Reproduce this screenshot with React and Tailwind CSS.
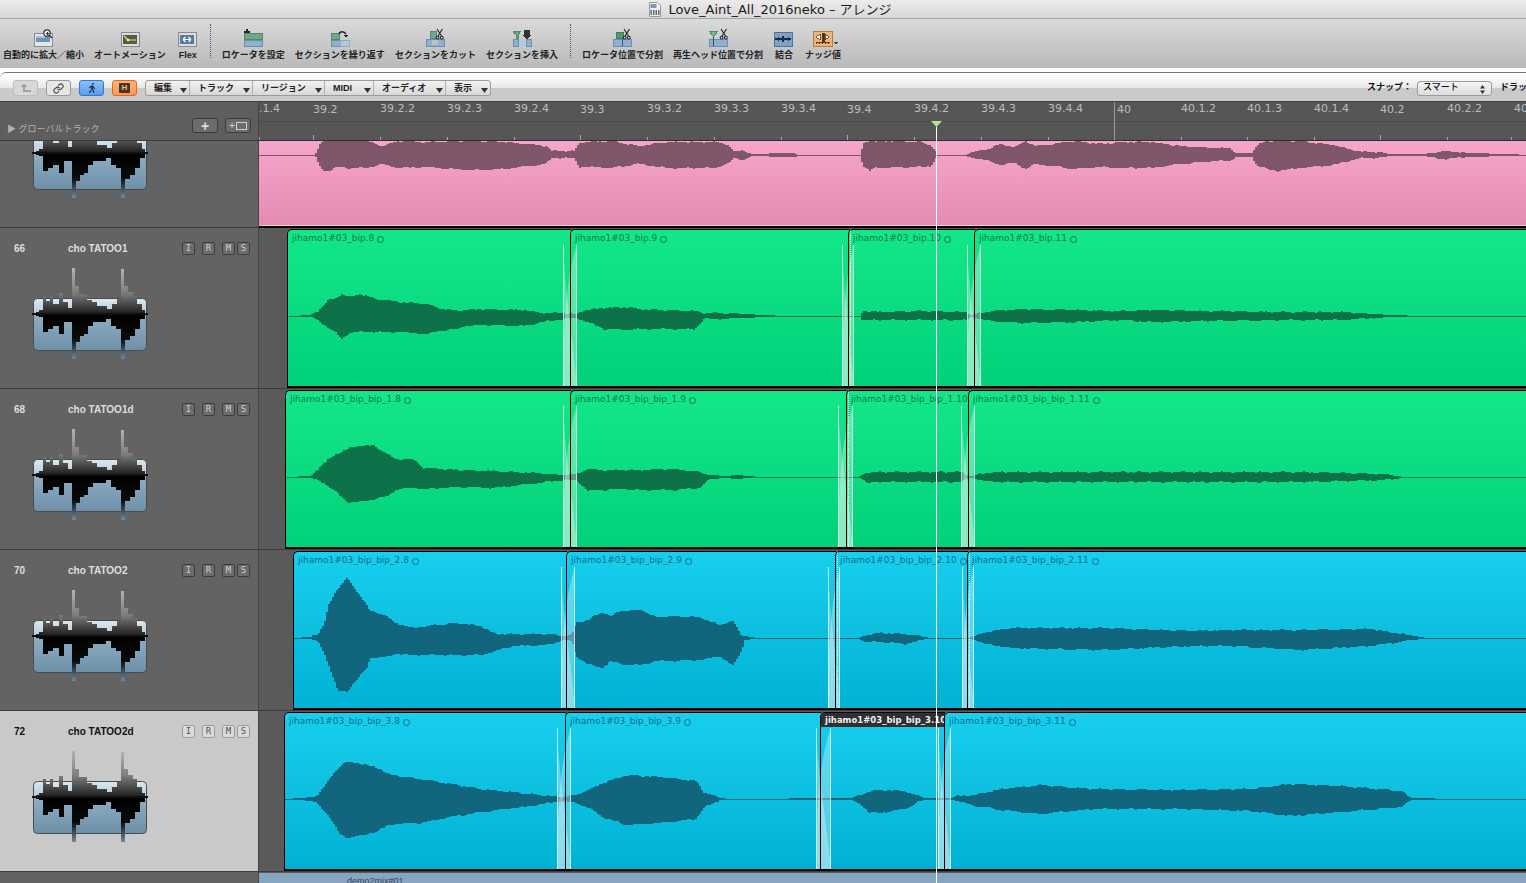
import React from 'react';
import { Link } from 'lucide-react';
import { FaWalking } from 'react-icons/fa';

const SANS = "font-['Liberation_Sans','Noto_Sans_CJK_JP',sans-serif]";

// envelope points: [x on screen, px above centre, px below centre]
const PINK_WAVE = [
  [259, 0, 1], [314, 0, 1], [320, 13, 13], [324, 15, 16], [330, 15, 15], [337, 15, 12], [349, 15, 13], [365, 14, 13], [381, 9, 9],
  [398, 14, 13], [422, 13, 12], [467, 14, 15], [504, 13, 14], [528, 11, 11], [545, 9, 9], [551, 4, 3], [573, 4, 3], [579, 12, 12],
  [586, 13, 12], [610, 14, 13], [637, 9, 9], [667, 13, 13], [714, 13, 13], [726, 11, 9], [734, 3, 3], [741, 5, 5], [751, 1, 1],
  [767, 1, 1], [770, 2, 2], [794, 2, 2], [797, 0, 1], [859, 0, 1], [863, 12, 12], [869, 15, 16], [875, 13, 12], [881, 14, 13],
  [920, 13, 12], [930, 10, 11], [936, 2, 2], [937, 0, 1], [965, 0, 1], [966, 2, 2], [984, 5, 5], [1000, 11, 10], [1014, 8, 8],
  [1025, 14, 14], [1034, 9, 9], [1052, 11, 11], [1072, 14, 14], [1100, 11, 12], [1124, 13, 13], [1151, 13, 13], [1179, 9, 9],
  [1213, 7, 6], [1229, 7, 6], [1235, 2, 2], [1251, 2, 2], [1255, 9, 9], [1265, 14, 14], [1275, 14, 16], [1299, 14, 13],
  [1333, 10, 10], [1347, 6, 6], [1361, 3, 3], [1377, 3, 3], [1389, 1, 1], [1425, 1, 1], [1427, 2, 2], [1445, 4, 4], [1465, 2, 2],
  [1511, 1, 1], [1526, 0, 1],
];

const WAVE_66 = [
  [289, 0, 1], [310, 1, 1], [317, 5, 4], [328, 16, 12], [334, 17, 16], [341, 22, 23], [348, 19, 17], [359, 22, 16], [376, 17, 16],
  [398, 14, 16], [426, 12, 18], [437, 8, 15], [457, 5, 13], [462, 6, 10], [485, 7, 9], [523, 6, 10], [541, 3, 6], [562, 3, 3],
  [575, 2, 2], [584, 6, 5], [603, 8, 13], [626, 9, 14], [637, 7, 13], [694, 5, 13], [703, 3, 3], [719, 3, 3], [766, 1, 1],
  [780, 0, 1], [859, 0, 1], [862, 5, 4], [880, 4, 4], [920, 5, 4], [965, 4, 4], [970, 1, 1], [980, 3, 3], [990, 5, 5], [1020, 7, 7],
  [1080, 6, 6], [1120, 5, 4], [1150, 6, 6], [1200, 5, 5], [1280, 4, 4], [1340, 4, 4], [1390, 1, 1], [1420, 0, 1], [1526, 0, 1],
];

const WAVE_68 = [
  [287, 0, 1], [310, 1, 1], [316, 7, 3], [323, 14, 6], [334, 22, 14], [346, 28, 25], [360, 32, 25], [373, 31, 22], [387, 23, 19],
  [394, 18, 13], [407, 18, 11], [414, 17, 11], [423, 9, 12], [459, 7, 10], [494, 6, 11], [537, 4, 6], [562, 2, 3], [575, 3, 3],
  [587, 8, 14], [601, 7, 13], [623, 7, 12], [637, 7, 13], [673, 8, 13], [698, 5, 11], [709, 2, 2], [726, 1, 1], [734, 2, 2],
  [751, 1, 1], [755, 0, 1], [858, 0, 1], [862, 2, 2], [866, 5, 6], [880, 5, 5], [960, 5, 5], [968, 1, 1], [975, 2, 2], [985, 4, 4],
  [1000, 5, 5], [1100, 5, 5], [1200, 5, 5], [1300, 5, 5], [1380, 3, 3], [1405, 0, 1], [1526, 0, 1],
];

const WAVE_70 = [
  [294, 0, 1], [309, 1, 1], [317, 4, 4], [323, 14, 14], [328, 33, 28], [337, 50, 53], [346, 60, 53], [355, 48, 43], [366, 33, 30],
  [369, 27, 20], [384, 23, 19], [394, 15, 16], [412, 10, 17], [434, 13, 17], [455, 15, 17], [480, 12, 17], [494, 4, 13], [512, 4, 8],
  [548, 4, 7], [562, 2, 2], [571, 3, 3], [575, 15, 18], [587, 18, 26], [601, 26, 30], [610, 22, 23], [619, 27, 26], [641, 28, 27],
  [655, 21, 23], [669, 22, 23], [698, 21, 22], [719, 13, 18], [732, 17, 28], [741, 2, 12], [744, 2, 2], [755, 0, 1], [858, 0, 1],
  [865, 3, 4], [880, 5, 4], [905, 4, 6], [925, 1, 1], [930, 0, 1], [968, 0, 1], [975, 2, 2], [985, 6, 6], [1010, 10, 10],
  [1100, 10, 12], [1190, 7, 8], [1230, 8, 8], [1300, 8, 12], [1370, 9, 8], [1420, 1, 1], [1424, 0, 1], [1526, 0, 1],
];

const WAVE_72 = [
  [285, 0, 1], [300, 1, 1], [313, 2, 3], [317, 5, 5], [328, 19, 17], [338, 32, 34], [345, 37, 39], [363, 35, 36], [377, 31, 32], [390, 24, 25],
  [420, 20, 24], [450, 15, 18], [480, 10, 13], [530, 5, 7], [560, 2, 2], [575, 4, 4], [590, 10, 10], [602, 16, 18], [625, 24, 26], [660, 22, 24], [695, 18, 20],
  [703, 7, 9], [720, 1, 1], [726, 0, 1], [850, 1, 1], [860, 4, 5], [868, 8, 14], [887, 9, 13], [907, 7, 9], [917, 3, 3], [924, 1, 1],
  [950, 1, 1], [957, 3, 2], [975, 4, 7], [1000, 10, 11], [1040, 14, 15], [1090, 10, 10], [1180, 9, 10], [1250, 10, 12],
  [1290, 15, 17], [1340, 13, 13], [1400, 8, 8], [1410, 1, 1], [1430, 1, 1], [1436, 0, 1], [1526, 0, 1],
];

const buildWave = (pts, cy) => {
  let top = '';
  let bottom = '';
  let n = 0;
  for (let x = pts[0][0]; x < pts[pts.length - 1][0]; x += 2) {
    while (pts[n + 1][0] < x) n++;
    const [x0, u0, d0] = pts[n];
    const [x1, u1, d1] = pts[n + 1];
    const t = (x - x0) / (x1 - x0 || 1);
    const up = u0 + (u1 - u0) * t;
    const down = d0 + (d1 - d0) * t;
    const wobble = Math.sin(x * 0.31) * 0.5 + Math.sin(x * 0.83) * 0.3;
    const wobble2 = Math.sin(x * 0.27 + 2) * 0.5 + Math.sin(x * 0.71) * 0.3;
    const yTop = cy - (up > 2 ? Math.round(up + wobble) : Math.round(up));
    const yBot = cy + Math.max(1, down > 2 ? Math.round(down + wobble2) : Math.round(down));
    const px = x - 259;
    top += `${top ? 'L' : 'M'}${px} ${yTop}L${px + 2} ${yTop}`;
    bottom = `L${px + 2} ${yBot}L${px} ${yBot}` + bottom;
  }
  return `${top}${bottom}Z`;
};

const GREEN = 'bg-linear-to-b from-[#13e788] to-[#01d17a]';
const BLUE = 'bg-linear-to-b from-[#18cfee] to-[#00b1d2]';

const LANES = [
  {
    num: '66', name: 'cho TATOO1', fill: GREEN, wave: '#0d7249', text: 'text-[#0b7a4d]', ring: 'border-[#0b7a4d]', cy: 88, pts: WAVE_66,
    regions: [
      { x: 287, label: 'jihamo1#03_bip.8' },
      { x: 570, label: 'jihamo1#03_bip.9' },
      { x: 848, label: 'jihamo1#03_bip.10', dotted: true },
      { x: 974, label: 'jihamo1#03_bip.11' },
    ],
    fades: [[563, 570, 577], [842, 848, 854], [967, 974, 981]],
  },
  {
    num: '68', name: 'cho TATOO1d', fill: GREEN, wave: '#0d7249', text: 'text-[#0b7a4d]', ring: 'border-[#0b7a4d]', cy: 88, pts: WAVE_68,
    regions: [
      { x: 285, label: 'jihamo1#03_bip_bip_1.8' },
      { x: 570, label: 'jihamo1#03_bip_bip_1.9' },
      { x: 846, label: 'jihamo1#03_bip_bip_1.10', dotted: true },
      { x: 968, label: 'jihamo1#03_bip_bip_1.11' },
    ],
    fades: [[838, 846, 853], [563, 570, 577], [961, 968, 975]],
  },
  {
    num: '70', name: 'cho TATOO2', fill: BLUE, wave: '#11657d', text: 'text-[#0c6f8c]', ring: 'border-[#0c6f8c]', cy: 88, pts: WAVE_70,
    regions: [
      { x: 293, label: 'jihamo1#03_bip_bip_2.8' },
      { x: 566, label: 'jihamo1#03_bip_bip_2.9' },
      { x: 835, label: 'jihamo1#03_bip_bip_2.10', dotted: true },
      { x: 967, label: 'jihamo1#03_bip_bip_2.11', dotted: true },
    ],
    fades: [[561, 566, 575], [828, 835, 840], [962, 967, 974]],
  },
  {
    num: '72', name: 'cho TATOO2d', fill: BLUE, wave: '#11657d', text: 'text-[#0c6f8c]', ring: 'border-[#0c6f8c]', cy: 88, pts: WAVE_72, active: true,
    regions: [
      { x: 284, label: 'jihamo1#03_bip_bip_3.8' },
      { x: 565, label: 'jihamo1#03_bip_bip_3.9' },
      { x: 820, label: 'jihamo1#03_bip_bip_3.10', selected: true },
      { x: 944, label: 'jihamo1#03_bip_bip_3.11' },
    ],
    fades: [[816, 820, 831], [557, 565, 571], [938, 944, 951]],
  },
];

const RULER = [
  ['.1.4', 259], ['39.2', 313, true], ['39.2.2', 380], ['39.2.3', 447], ['39.2.4', 514], ['39.3', 580, true], ['39.3.2', 647],
  ['39.3.3', 714], ['39.3.4', 781], ['39.4', 847, true], ['39.4.2', 914], ['39.4.3', 981], ['39.4.4', 1048], ['40', 1117, true],
  ['40.1.2', 1181], ['40.1.3', 1247], ['40.1.4', 1314], ['40.2', 1380, true], ['40.2.2', 1447], ['40', 1514],
];

const Bars = ({ children }) => (
  <svg width="20" height="18" viewBox="0 0 20 18" className="overflow-visible" shapeRendering="crispEdges">
    {children}
  </svg>
);

const Scissors = ({ x = 11 }) => (
  <g transform={`translate(${x} 0)`} fill="none" stroke="#222" strokeWidth="1.1" shapeRendering="auto">
    <path d="M1 0l4.500 7M6.500 0L2 7" />
    <circle cx="1.600" cy="8.600" r="1.400" fill="#eee" />
    <circle cx="5.800" cy="8.600" r="1.400" fill="#eee" />
  </g>
);

const ICONS = {
  zoom: (
    <Bars>
      <rect x="0" y="4" width="18" height="13" fill="#e6e6e6" stroke="#8a8a8a" />
      <rect x="2" y="7" width="14" height="6" fill="#6f93b8" />
      <rect x="2" y="7" width="9" height="2" fill="#a9c2da" />
      <circle cx="13" cy="4" r="3.200" fill="#f2f2f2" stroke="#333" strokeWidth="1.200" shapeRendering="auto" />
      <path d="M15.300 6.300l2.700 2.700" stroke="#333" strokeWidth="1.400" shapeRendering="auto" />
      <path d="M11.500 4h3M13 2.500v3" stroke="#333" />
    </Bars>
  ),
  auto: (
    <Bars>
      <rect x="1" y="3" width="18" height="14" fill="#dcdcdc" stroke="#8a8a8a" />
      <rect x="3" y="6" width="14" height="9" fill="#5a5a48" />
      <path d="M4 7l4 4h8" fill="none" stroke="#f2e060" strokeWidth="1.200" shapeRendering="auto" />
      <circle cx="8" cy="11" r="1.300" fill="#fff7a0" shapeRendering="auto" />
    </Bars>
  ),
  flex: (
    <Bars>
      <rect x="0" y="3" width="18" height="14" fill="#dcdcdc" stroke="#8a8a8a" />
      <rect x="2" y="6" width="14" height="9" fill="#557a9c" />
      <path d="M5 10.500h8M5 10.500l2.500-2.500M5 10.500l2.500 2.500M13 10.500l-2.500-2.500M13 10.500l-2.500 2.500" fill="none" stroke="#fff" strokeWidth="1.200" shapeRendering="auto" />
    </Bars>
  ),
  locator: (
    <Bars>
      <path d="M3 0h2v2h2v2H5v2H3V4H1V2h2z" fill="#222" />
      <rect x="1" y="4" width="18" height="6" fill="#6fa98a" stroke="#4e8a6b" />
      <rect x="1" y="11" width="18" height="6" fill="#8fb0cf" stroke="#6c8fb0" />
    </Bars>
  ),
  repeat: (
    <Bars>
      <rect x="1" y="4" width="8" height="6" fill="#6fa98a" stroke="#4e8a6b" />
      <rect x="1" y="11" width="9" height="6" fill="#8fb0cf" stroke="#6c8fb0" />
      <rect x="10" y="11" width="9" height="6" fill="#b4c8da" stroke="#93abc0" />
      <path d="M9 5c1-3 5-3 7 0" fill="none" stroke="#222" strokeWidth="1.600" shapeRendering="auto" />
      <path d="M13.500 5.500h5l-2.500 3z" fill="#222" />
    </Bars>
  ),
  cut: (
    <Bars>
      <rect x="5" y="2" width="6" height="7" fill="#6fa98a" stroke="#4e8a6b" />
      <rect x="1" y="10" width="18" height="7" fill="#8fb0cf" stroke="#6c8fb0" />
      <rect x="7" y="11" width="6" height="5" fill="#c0c0c0" />
      <Scissors />
    </Bars>
  ),
  insert: (
    <Bars>
      <path d="M1 2h8L6 6v3H4V6z" fill="#6fa98a" stroke="#4e8a6b" />
      <rect x="1" y="10" width="5" height="7" fill="#8fb0cf" stroke="#6c8fb0" />
      <rect x="14" y="10" width="5" height="7" fill="#8fb0cf" stroke="#6c8fb0" />
      <rect x="7" y="10" width="6" height="7" fill="#b4c8da" />
      <path d="M12 1h6v5h2l-5 4-5-4h2z" fill="#333" />
    </Bars>
  ),
  splitLoc: (
    <Bars>
      <rect x="4" y="3" width="7" height="6" fill="#4f9a72" stroke="#3c7f5c" />
      <rect x="1" y="10" width="18" height="7" fill="#8fb0cf" stroke="#6c8fb0" />
      <path d="M10 10v7" stroke="#3d5d7c" />
      <Scissors />
    </Bars>
  ),
  splitHead: (
    <Bars>
      <rect x="1" y="10" width="18" height="7" fill="#8fb0cf" stroke="#6c8fb0" />
      <path d="M1 2h9L5.500 8z" fill="#6fbf8f" stroke="#4e8a6b" />
      <path d="M5.500 8v9" stroke="#2c4660" />
      <Scissors x={12} />
    </Bars>
  ),
  merge: (
    <Bars>
      <rect x="0" y="3" width="18" height="14" fill="#7ea2c6" stroke="#4f7396" />
      <path d="M1 10h16" stroke="#1c2c3c" strokeWidth="1.200" />
      <path d="M4 8v4M14 8v4M9 7.500l-2 2.500 2 2.500 2-2.500z" fill="#1c2c3c" stroke="#1c2c3c" />
    </Bars>
  ),
  nudge: (
    <Bars>
      <rect x="0" y="2" width="19" height="15" fill="#edb47c" stroke="#b47a3f" />
      <path d="M7 5L3 8l4 3zM12 5l4 3-4 3z" fill="#fff" stroke="#5a3a18" strokeWidth="0.800" />
      <path d="M9 4h2v9H9zM3 13h14" fill="#4a2f12" stroke="#5a3a18" />
      <path d="M3 13v2M6 13v2M9 13v2M12 13v2M15 13v2" stroke="#5a3a18" />
      <path d="M21 13h4l-2 3z" fill="#444" />
    </Bars>
  ),
};

const TOOLS = [
  { icon: 'zoom', label: '自動的に拡大／縮小' },
  { icon: 'auto', label: 'オートメーション' },
  { icon: 'flex', label: 'Flex', cls: 'px-[2px]' },
  { sep: 'ml-0' },
  { icon: 'locator', label: 'ロケータを設定' },
  { icon: 'repeat', label: 'セクションを繰り返す' },
  { icon: 'cut', label: 'セクションをカット' },
  { icon: 'insert', label: 'セクションを挿入' },
  { sep: 'ml-[2px]' },
  { icon: 'splitLoc', label: 'ロケータ位置で分割' },
  { icon: 'splitHead', label: '再生ヘッド位置で分割' },
  { icon: 'merge', label: '結合', cls: 'ml-[1px] !mr-[11px]' },
  { icon: 'nudge', label: 'ナッジ値' },
];

const MENUS = [
  ['編集', 'w-[44px]'], ['トラック', 'w-[63px]'], ['リージョン', 'w-[72px]'], ['MIDI', 'w-[49px]'], ['オーディオ', 'w-[72px]'], ['表示', 'w-[44px]'],
];

const Toolbar = () => (
  <div className="flex h-[49px] items-start bg-linear-to-b from-[#dadada] to-[#b9b9b9] pl-[3px] pt-[10px]">
    {TOOLS.map((t, i) =>
      t.sep ? (
        <div key={i} className={`mt-[-5px] mr-[11px] h-[34px] w-px border-l border-dotted border-[#555] ${t.sep}`} />
      ) : (
        <div key={i} className={`mr-[10px] flex flex-col items-center ${t.cls || ''}`}>
          <div className="h-[18px]">{ICONS[t.icon]}</div>
          <span className="mt-[3px] whitespace-nowrap text-[9px] leading-[10px] font-bold text-[#222]">{t.label}</span>
        </div>
      )
    )}
  </div>
);

const SmallButton = ({ cls, children }) => (
  <div className={`flex h-[16px] w-[25px] items-center justify-center rounded-[3px] border ${cls}`}>{children}</div>
);

const LocalBar = () => (
  <div className="bg-white pt-[4px]">
    <div className="flex h-[30px] items-center rounded-tl-[6px] border-t border-b border-t-[#777] border-b-[#3d3d3d] bg-[linear-gradient(#fff_0,#fff_3px,#e6e6e6_15px,#cacaca_15px)] pt-[2px] pr-0 pl-[13px]">
      <SmallButton cls="border-[#bdbdbd] bg-[#d8d8d8]">
        <svg width="13" height="10" viewBox="0 0 13 10"><path d="M4 9V4H1.500L5 .5 8.500 4H6v3h6v2z" fill="#a2a2a2" /></svg>
      </SmallButton>
      <SmallButton cls="ml-[8px] border-[#999] bg-[#e6e6e6]">
        <Link size={11} strokeWidth={2.4} color="#444" />
      </SmallButton>
      <SmallButton cls="ml-[8px] border-[#2d78d0] bg-linear-to-b from-[#8cc0f7] to-[#5a9cea]">
        <FaWalking size={10} color="#17314f" />
      </SmallButton>
      <SmallButton cls="ml-[8px] border-[#e06a1f] bg-linear-to-b from-[#ffb37a] to-[#f79a58]">
        <span className="flex h-[10px] w-[11px] items-center justify-center rounded-[1px] bg-[#4a3526] text-[8px] leading-none font-bold text-[#f5b98a]">H</span>
      </SmallButton>
      <div className="ml-[8px] flex h-[16px] overflow-hidden rounded-[3px] border border-[#9a9a9a] bg-linear-to-b from-[#f2f2f2] to-[#d8d8d8]">
        {MENUS.map(([label, w]) => (
          <div key={label} className={`relative flex items-center border-r border-[#b0b0b0] pl-[8px] text-[9px] leading-[10px] font-bold text-[#222] last:border-r-0 ${w}`}>
            {label}
            <svg className="absolute right-[2px] bottom-[2px]" width="7" height="5" viewBox="0 0 7 5"><path d="M0 0h7L3.500 5z" fill="#333" /></svg>
          </div>
        ))}
      </div>
      <div className="ml-auto flex items-center">
        <span className="text-[9px] font-bold text-[#111]">スナップ：</span>
        <div className="relative mr-[8px] ml-[5px] flex h-[15px] w-[75px] items-center rounded-[3px] border border-[#9a9a9a] bg-linear-to-b from-[#f4f4f4] to-[#dedede] pl-[5px] text-[9px] font-medium text-[#111]">
          スマート
          <svg className="absolute top-[3px] right-[6px]" width="5" height="9" viewBox="0 0 5 9"><path d="M0 3.500L2.500 0 5 3.500zM0 5.500L2.500 9 5 5.500z" fill="#333" /></svg>
        </div>
        <span className="w-[26px] overflow-hidden text-[9px] whitespace-nowrap font-bold text-[#111]">ドラッグ</span>
      </div>
    </div>
  </div>
);

const Ruler = () => (
  <div className="flex h-[39px]">
    <div className="flex w-[259px] items-start justify-between border-r border-b border-r-[#444] border-b-[#3c3c3c] bg-[#5e5e5e] pt-[16px] pr-[7px] pl-[7px]">
      <span className="mt-[5px] text-[9px] leading-[12px] text-[#b2b2b2]">▶ グローバルトラック</span>
      <div className="flex gap-[7px]">
        <div className="flex h-[15px] w-[26px] items-center justify-center rounded-[3px] border border-[#3a3a3a] bg-[#6c6c6c] text-[14px] leading-none font-bold text-[#dcdcdc]">+</div>
        <div className="flex h-[15px] w-[26px] items-center justify-center gap-px rounded-[3px] border border-[#3a3a3a] bg-[#6c6c6c] text-[11px] leading-none text-[#d0d0d0]">
          +
          <span className="h-[8px] w-[11px] border border-[#d0d0d0]" />
        </div>
      </div>
    </div>
    <div className="relative flex-1 overflow-hidden border-b border-[#2f2f2f] bg-[#565656] font-['DejaVu_Sans',sans-serif] text-[11px] leading-[13px] text-[#bcbcbc]">
      <div className="absolute inset-x-0 top-[19px] h-px bg-[#4a4a4a]" />
      {RULER.map(([label, x, beat]) => (
        <React.Fragment key={label + x}>
          <span className={`absolute ${beat ? 'top-[1px]' : 'top-0'}`} style={{ left: x - 259 }}>{label}</span>
          <span className={`absolute bottom-0 w-px bg-[#a8a8a8] ${beat ? 'h-[5px]' : 'h-[3px]'}`} style={{ left: x - (label === '40' ? 3 : 0) - 259 }} />
        </React.Fragment>
      ))}
      <div className="absolute top-0 bottom-0 left-[855px] w-px bg-[#9a9a9a]" />
    </div>
  </div>
);

const TrackIcon = () => {
  const up = [[0, 1], [3, 2], [6, 4], [10, 18], [13, 13], [17, 18], [20, 10], [26, 21], [30, 12], [35, 6], [39, 46], [42, 28], [46, 20], [50, 20], [54, 14], [59, 12], [64, 8], [70, 8], [74, 5], [79, 10], [84, 15], [88, 45], [91, 28], [95, 22], [100, 18], [104, 10], [109, 4], [112, 1]];
  const down = [[0, 1], [3, 2], [6, 3], [10, 18], [15, 15], [20, 12], [26, 20], [31, 8], [35, 8], [39, 45], [43, 28], [47, 22], [51, 20], [55, 12], [60, 8], [66, 8], [73, 5], [78, 12], [83, 15], [88, 45], [92, 26], [97, 22], [102, 15], [107, 5], [112, 1]];
  const stairs = (arr, sign) => {
    let d = `M1 46`;
    arr.forEach(([x, h], i) => {
      const next = arr[i + 1] ? arr[i + 1][0] : x + 2;
      d += `L${x + 1} ${46 + sign * h}L${next + 1} ${46 + sign * h}`;
    });
    return `${d}L114 46Z`;
  };
  return (
    <svg width="116" height="92" viewBox="0 0 116 92" className="mt-[13px] ml-[32px] block">
      <defs>
        <linearGradient id="iconBg" x1="0" y1="0" x2="0" y2="1">
          <stop offset="0" stopColor="#dbe8f0" />
          <stop offset="0.3" stopColor="#b4cbdb" />
          <stop offset="0.32" stopColor="#8eaec4" />
          <stop offset="1" stopColor="#6d8fa8" />
        </linearGradient>
        <linearGradient id="iconUp" x1="0" y1="0" x2="0" y2="1">
          <stop offset="0" stopColor="#b4b4b4" />
          <stop offset="0.55" stopColor="#7c7c7c" />
          <stop offset="1" stopColor="#1c1c1c" />
        </linearGradient>
        <linearGradient id="iconDown" x1="0" y1="0" x2="0" y2="1">
          <stop offset="0" stopColor="#000" />
          <stop offset="0.55" stopColor="#0a0a0a" />
          <stop offset="1" stopColor="#6d8aa0" />
        </linearGradient>
      </defs>
      <rect x="1.500" y="30.500" width="113" height="52" rx="4" fill="url(#iconBg)" stroke="#4a4a4a" />
      <path d={stairs(up, -1)} fill="url(#iconUp)" />
      <path d={stairs(down, 1)} fill="url(#iconDown)" />
      <rect x="0" y="45" width="116" height="2" fill="#111" />
    </svg>
  );
};

const TrackButton = ({ label, active, cls }) => (
  <div className={`flex h-[13px] w-[13px] items-center justify-center rounded-[2px] border font-['DejaVu_Sans_Mono',monospace] text-[9px] leading-none ${active ? 'border-[#9c9c9c] bg-[#dadada] text-[#555]' : 'border-[#3c3c3c] bg-[#6c6c6c] text-[#cfcfcf]'} ${cls}`}>
    {label}
  </div>
);

const TrackHeader = ({ num, name, active, iconOnly }) => (
  <div className={`h-[161px] w-[259px] shrink-0 border-r border-b border-r-[#444] border-b-[#3d3d3d] pt-[14px] ${active ? 'bg-[#c9c9c9]' : 'bg-[#636363]'}`}>
    <div className="flex h-[13px] items-center">
      {!iconOnly && (
        <>
          <span className={`ml-[14px] w-[54px] text-[10px] font-bold ${active ? 'text-[#111]' : 'text-[#dedede]'}`}>{num}</span>
          <span className={`w-[114px] text-[10px] font-bold ${active ? 'text-[#111]' : 'text-[#dedede]'}`}>{name}</span>
          <TrackButton label="I" active={active} />
          <TrackButton label="R" active={active} cls="ml-[7px]" />
          <TrackButton label="M" active={active} cls="ml-[7px]" />
          <TrackButton label="S" active={active} cls="ml-[2px]" />
        </>
      )}
    </div>
    <TrackIcon />
  </div>
);

// crossfade: two curves that cross, each filled down to the bottom of the lane
const Fade = ({ l, r }) => {
  const top = 17;
  const bottom = 159;
  const [x0, x1] = [l - 259, r - 259];
  const w = x1 - x0;
  return (
    <g>
      <path d={`M${x0} ${top}C${x0 + w * 0.15} ${top + 50} ${x1 - w * 0.3} ${bottom - 50} ${x1} ${bottom}L${x0} ${bottom}Z`} fill="#fff" fillOpacity="0.32" />
      <path d={`M${x1} ${top}C${x0 + w * 0.35} ${top + 25} ${x0} ${bottom - 70} ${x0} ${bottom}L${x1} ${bottom}Z`} fill="#fff" fillOpacity="0.32" />
      <path d={`M${x0 + 0.5} ${top}V${bottom}M${x1 - 0.5} ${top}V${bottom}`} stroke="#fff" strokeOpacity="0.65" fill="none" />
    </g>
  );
};

const Lane = ({ lane }) => {
  const regionBoxes = lane.regions.map((r, i) => {
    const next = lane.regions[i + 1];
    return { ...r, left: r.x - 259, width: (next ? next.x + 1 : 1540) - r.x };
  });
  return (
    <div className="relative h-[161px] flex-1 overflow-hidden border-b border-[#3d3d3d] bg-[#5a5a5a]">
      {regionBoxes.map(r => (
        <div key={r.x} className={`absolute top-px bottom-0 rounded-tl-[5px] ${lane.fill}`} style={{ left: r.left, width: r.width }} />
      ))}
      <svg className="absolute inset-0" width="1267" height="160">
        <path d={buildWave(lane.pts, lane.cy)} fill={lane.wave} shapeRendering="crispEdges" />
        {lane.fades.map(([l, b, r]) => (
          <Fade key={b} l={l} r={r} />
        ))}
      </svg>
      {regionBoxes.map(r => (
        <div key={r.x} className="absolute top-px bottom-0 overflow-hidden rounded-tl-[5px] border-t border-b-2 border-l border-black" style={{ left: r.left, width: r.width }}>
          {r.dotted && <div className="absolute inset-y-0 left-[1px] border-l border-dotted border-[#dfffff]" />}
          {r.selected ? (
            <div className="flex h-[14px] items-center bg-[#2e3033] pt-px pl-[4px] font-['DejaVu_Sans',sans-serif] text-[8.5px] font-bold whitespace-nowrap text-[#f0f0f0]">{r.label}</div>
          ) : (
            <div className={`flex h-[18px] items-center gap-[3px] pl-[4px] font-['DejaVu_Sans',sans-serif] text-[9px] whitespace-nowrap ${lane.text}`}>
              {r.label}
              <span className={`h-[7px] w-[7px] shrink-0 rounded-full border ${lane.ring}`} />
            </div>
          )}
        </div>
      ))}
    </div>
  );
};

export default function App() {
  return (
    <div className={`flex h-[883px] w-[1526px] flex-col overflow-hidden bg-[#5a5a5a] ${SANS}`}>
      {/* Title bar */}
      <div className="flex h-[19px] shrink-0 items-center justify-center border-b border-[#a8a8a8] bg-linear-to-b from-[#ececec] to-[#d8d8d8] pl-[15px]">
        <svg width="12" height="15" viewBox="0 0 12 15" className="mr-[7px]">
          <path d="M0.500 0.500h8l3 3v11h-11z" fill="#eef0f2" stroke="#9a9a9a" />
          <rect x="1.500" y="2" width="6" height="4" fill="#7d9ab5" />
          <rect x="1.500" y="8" width="9" height="5" fill="#6c6c6c" />
          <path d="M3.500 8v5M6 8v5M8.500 8v5" stroke="#eee" />
        </svg>
        <span className="font-['DejaVu_Sans','Noto_Sans_CJK_JP',sans-serif] text-[13px] leading-[15px] whitespace-nowrap text-[#1a1a1a]">Love_Aint_All_2016neko – アレンジ</span>
      </div>
      <Toolbar />
      <LocalBar />

      {/* Arrange area */}
      <div className="relative flex-1 overflow-hidden">
        <Ruler />

        {/* Pink track, its header is cut off at the top */}
        <div className="flex h-[87px]">
          <div className="flex h-[87px] flex-col justify-end overflow-hidden">
            <div className="shrink-0">
              <TrackHeader iconOnly />
            </div>
          </div>
          <div className="relative flex-1 overflow-hidden border-b-2 border-black bg-linear-to-b from-[#f6a5cb] to-[#e48bb4]">
            <svg className="absolute inset-0" width="1267" height="85">
              <path d={buildWave(PINK_WAVE, 14)} fill="#80566a" shapeRendering="crispEdges" />
            </svg>
            <div className="absolute inset-x-0 bottom-0 h-px bg-[#f7c9de]" />
          </div>
        </div>

        {LANES.map(lane => (
          <div key={lane.num} className="flex">
            <TrackHeader num={lane.num} name={lane.name} active={lane.active} />
            <Lane lane={lane} />
          </div>
        ))}

        {/* Next track, cut off by the window */}
        <div className="flex h-[11px]">
          <div className="w-[259px] shrink-0 border-r border-[#444] bg-[#636363]" />
          <div className="flex-1 overflow-hidden border-t border-[#5a5a5a] bg-[#86a5c1] pl-[88px] text-[9px] leading-[16px] text-[#33465a]">demo2mix#01</div>
        </div>

        {/* Playhead */}
        <div className="absolute top-[25px] bottom-0 left-[936px] w-px bg-white" />
        <svg className="absolute top-[19px] left-[931px]" width="11" height="6" viewBox="0 0 11 6">
          <path d="M0 0h11L5.500 6z" fill="#b6e09a" />
        </svg>
      </div>
    </div>
  );
}
